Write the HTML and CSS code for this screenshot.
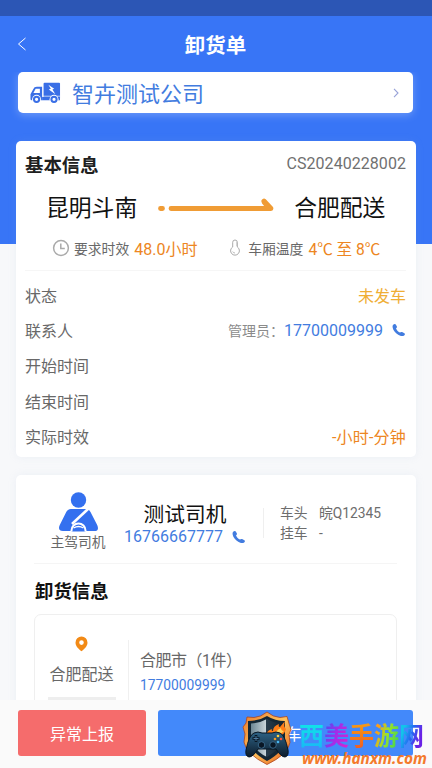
FILE: index.html
```html
<!DOCTYPE html>
<html lang="zh-CN">
<head>
<meta charset="utf-8">
<title>卸货单</title>
<link rel="stylesheet" href="styles.css">
</head>
<body>
<svg class="defs" width="0" height="0">
  <symbol id="phone" viewBox="0 0 14 14"><path d="M1.200 1.800C2 .8 3.300.7 3.800 1.500l1.100 2c.3.7-.2 1.300-.9 1.900.6 1.500 1.900 2.900 3.900 4.100.8-.6 1.500-.8 2.200-.4l2.300 1.200c.8.5.7 1.500-.3 2.200-1.400 1-3.700.6-5.900-.8C3.300 9.900 1.200 7.200.7 4.700.4 3.400.6 2.500 1.200 1.800Z" fill="currentColor"/></symbol>
</svg>
<div class="app">
  <div class="status-bar"></div>
  <header class="nav">
    <svg class="back" viewBox="0 0 10 14"><path d="M8.500 1 1.500 7l7 6" fill="none" stroke="#fff" stroke-width="1"/></svg>
    <h1>卸货单</h1>
  </header>
  <main class="content">
    <section class="company">
      <svg class="truck" viewBox="0 0 32 22">
        <path d="M15 .5h15q1 0 1 1v15H14v-15q0-1 1-1Z" fill="#3a6fe6"/>
        <path d="M12.500 4.500v14H1.800q-1.300 0-1.300-1.300v-5L3.300 7Q4.300 4.500 7 4.500Z" fill="#3a6fe6"/>
        <path d="M5.800 6.500h4.400V11H3.500Z" fill="#fff"/>
        <path d="M12.500 15h18.500v3.500H12.500Z" fill="#3a6fe6"/>
        <path d="M13 14.300h18" stroke="#fff" stroke-width=".7"/>
        <circle cx="6.800" cy="17.500" r="4.600" fill="#fff"/><circle cx="24.800" cy="17.500" r="4.600" fill="#fff"/>
        <circle cx="6.800" cy="17.500" r="2.700" fill="#fff" stroke="#3a6fe6" stroke-width="2.100"/>
        <circle cx="24.800" cy="17.500" r="2.700" fill="#fff" stroke="#3a6fe6" stroke-width="2.100"/>
        <path d="m19 2.500 6 4-1.800.9 3 4.900-6.800-4.900 2.100-.9Z" fill="#fff"/>
      </svg>
      <span class="company-name">智卉测试公司</span>
      <svg class="go" viewBox="0 0 6 10"><path d="m1 .8 4 4.200-4 4.200" fill="none" stroke="#98a2d8" stroke-width="1.100"/></svg>
    </section>

    <section class="card basic">
      <div class="basic-head"><h2>基本信息</h2><span class="order-no">CS20240228002</span></div>
      <div class="route">
        <span>昆明斗南</span>
        <svg class="arrow" viewBox="0 0 118 16"><g stroke="#f09c35" stroke-width="4.800" stroke-linecap="round" stroke-linejoin="round" fill="none"><path d="M3.500 10.500h2M14 10.500h100L107 3"/><path d="M107 4l4 5" /></g></svg>
        <span>合肥配送</span>
      </div>
      <div class="limits">
        <svg class="clock" viewBox="0 0 18 18"><circle cx="9" cy="9" r="7.400" fill="none" stroke="#aaa" stroke-width="1.500"/><path d="M8.800 4.500v5h4" fill="none" stroke="#aaa" stroke-width="1.500"/></svg>
        <span class="limit-label">要求时效</span><b class="time">48.0小时</b>
        <svg class="thermo" viewBox="0 0 12 17"><path d="M3.700 8V3.300a2.300 2.300 0 0 1 4.600 0V8a4.400 4.400 0 1 1-4.600 0Z" fill="none" stroke="#aaa" stroke-width="1"/><path d="M3.700 12.500q.5 1.500 2.300 1.500M8.300 4H7M8.300 6H7" fill="none" stroke="#aaa" stroke-width=".8"/></svg>
        <span class="limit-label">车厢温度</span><b class="temp">4℃ 至 8℃</b>
      </div>
      <dl class="rows">
        <div><dt>状态</dt><dd class="yellow">未发车</dd></div>
        <div><dt>联系人</dt><dd class="contact"><small>管理员：</small><span>17700009999</span><svg class="phone"><use href="#phone"/></svg></dd></div>
        <div><dt>开始时间</dt><dd></dd></div>
        <div><dt>结束时间</dt><dd></dd></div>
        <div><dt>实际时效</dt><dd class="orange">-小时-分钟</dd></div>
      </dl>
    </section>

    <section class="card trip">
      <div class="driver">
        <div class="role">
          <svg viewBox="0 0 40 40"><circle cx="20.500" cy="8" r="7.700" fill="#3470ef"/><path d="M13 17h15q3 0 4.500 3l6.700 13q2.500 6-3 6H5q-6-.5-3-6.500L8 20.500Q9.500 17 13 17Z" fill="#3470ef"/><path d="M30.500 16.500 14 32" stroke="#fff" stroke-width="2.600"/><path d="M13.500 39.500v-1a7 7 0 0 1 14 0v1" fill="#3470ef" stroke="#fff" stroke-width="2"/><path d="M15.500 36q5-3 10 0" fill="none" stroke="#fff" stroke-width="1.400"/></svg>
          <span>主驾司机</span>
        </div>
        <div class="person">
          <strong>测试司机</strong>
          <div class="tel"><span>16766667777</span><svg class="phone"><use href="#phone"/></svg></div>
        </div>
        <div class="plates"><span>车头</span><span>皖Q12345</span><span>挂车</span><span>-</span></div>
      </div>
      <h2 class="unload-title">卸货信息</h2>
      <div class="stop">
        <div class="stop-name">
          <svg viewBox="0 0 13 16"><path fill-rule="evenodd" d="M6.500.5a6 6 0 0 0-6 6.200C.5 10.700 5 14 6.500 15.300 8 14 12.500 10.700 12.500 6.700A6 6 0 0 0 6.500.5Zm0 3.800a2.300 2.300 0 1 1 0 4.600 2.300 2.300 0 0 1 0-4.600Z" fill="#f28a16"/></svg>
          <span>合肥配送</span>
          <i></i>
        </div>
        <div class="stop-info"><span>合肥市（1件）</span><a>17700009999</a></div>
      </div>
    </section>
  </main>
  <footer class="actions"><button class="report">异常上报</button><button class="depart">发车</button></footer>
</div>

<div class="watermark">
  <svg class="shield" viewBox="0 0 50 54">
    <defs>
      <linearGradient id="rim" x1="0" y1="0" x2="1" y2="1"><stop offset="0" stop-color="#e8772a"/><stop offset=".5" stop-color="#ffc35c"/><stop offset="1" stop-color="#e25a16"/></linearGradient>
      <linearGradient id="steel" x1="0" y1="0" x2="1" y2="0"><stop offset="0" stop-color="#6d8794"/><stop offset=".48" stop-color="#c7d4da"/><stop offset=".5" stop-color="#263c4c"/><stop offset="1" stop-color="#16242f"/></linearGradient>
      <linearGradient id="pad" x1="0" y1="0" x2="0" y2="1"><stop offset="0" stop-color="#2e6385"/><stop offset="1" stop-color="#0c1b2b"/></linearGradient>
    </defs>
    <path d="M25 1q6 5 13 5.500l7-1 2 7 2 6-2 5 1 8q-2 12-23 22Q4 43 2 31l1-8-2-7 3-4 1-6 7 .5Q19 6 25 1Z" fill="url(#rim)" stroke="#ae451d" stroke-width=".8"/>
    <path d="M25 5q8 5 18 5v18q-1 13-18 22Q8 41 6 28V10Q17 10 25 5Z" fill="#142734"/>
    <path d="M25 8q7 4 15 4.500V28q-2 11-15 18Q11 39 9 28V12.500Q18 12 25 8Z" fill="url(#steel)"/>
    <path d="M24 23q2-4 6-5-1 2 1 2 0-5 6-7-1 3 1 3l5-6q-2 5 1 8-1 5-6 7Z" fill="#ff7d16"/>
    <path d="M29 23q3-3 5-2 2-3 5-4 0 3 3 3l-5 4Z" fill="#ffd25a"/>
    <path d="M12 22q4-2 8 0h10q4-2 8 0 5 2 8 17 1 6-3 7-4 0-9-8H16q-5 8-9 8-4-1-3-7 3-15 8-17Z" fill="url(#pad)" stroke="#071522"/>
    <path d="M14 24v7M10.500 27.500h7" stroke="#071522" stroke-width="2.600"/><path d="M14 25v5M11.500 27.500h5" stroke="#4d7ba0"/>
    <circle cx="19.500" cy="34" r="3.300" fill="#091624" stroke="#386687"/><circle cx="31" cy="34" r="3.300" fill="#091624" stroke="#386687"/>
    <circle cx="36" cy="25" r="1.300" fill="#ffd33c"/><circle cx="39" cy="28" r="1.300" fill="#ff513a"/><circle cx="36" cy="31" r="1.300" fill="#48b5ee"/><circle cx="33" cy="28" r="1.300" fill="#f09a25"/>
  </svg>
  <div class="mark-text">
    <div class="mark-name"><span class="m1">西</span><span class="m2">美</span><span class="m3">手</span><span class="m4">游</span><span class="m5">网</span></div>
    <div class="mark-url">www.hanxm.com</div>
  </div>
</div>
</body>
</html>
```
FILE: styles.css
```css
* { box-sizing: border-box; margin: 0; padding: 0; }
body { width: 432px; height: 768px; overflow: hidden; font-family: Roboto, "Noto Sans CJK SC", sans-serif; font-size: 16px; color: #686868; }
h1, h2, b, strong, small { font-weight: 400; }
svg { display: block; flex: none; }
.defs { position: absolute; }
.app { display: flex; flex-direction: column; height: 768px; background: linear-gradient(#3875f6 244px, #f7f8fa 244px); }
.status-bar { height: 16px; background: #2c56b5; flex: none; }
.nav { height: 56px; flex: none; display: grid; grid-template-columns: 40px 1fr 40px; align-items: center; color: #fff; padding-top: 4px; }
.back { width: 10px; height: 14px; margin: -4px 0 0 17px; }
.nav h1 { font-size: 20.500px; line-height: 30px; font-weight: 700; text-align: center; margin-left: -1px; }
.content { flex: 1; min-height: 0; overflow: hidden; padding: 0 16px; }
.company { height: 41px; margin: 0 3px 28px 2px; background: #fff; border-radius: 5px; display: flex; align-items: center; padding: 0 14px 0 12px; box-shadow: 0 2px 8px rgba(255,255,255,.28); }
.truck { width: 31px; height: 22px; }
.company-name { flex: 1; margin-left: 11px; font-size: 22px; line-height: 32px; color: #427cdf; margin-top: 4px; }
.go { width: 6px; height: 10px; }
.card { background: #fff; border-radius: 5px; box-shadow: 0 0 8px rgba(160,180,210,.12); }
.basic { height: 316px; padding: 0 10px 0 9px; margin-bottom: 18px; }
.basic-head { height: 46px; display: flex; align-items: center; justify-content: space-between; }
.basic-head h2 { font-size: 18.400px; color: #202020; font-weight: 700; }
.order-no { color: #707070; padding-bottom: 1px; letter-spacing: .05px; }
.route { height: 42px; display: flex; align-items: center; padding-left: 21px; color: #111; font-size: 22.800px; }
.route span { margin-top: -4px; }
.arrow { width: 118px; height: 16px; margin: -4px 19px 0 20px; }
.limits { height: 42px; display: flex; align-items: center; padding-left: 27px; margin-bottom: 6px; border-bottom: 1px solid #f6f6f6; padding-bottom: 4px; }
.limits b, .orange { color: #ed8622; }
.limit-label { font-size: 13.800px; margin-right: 5px; }
.clock { width: 18px; height: 18px; margin-right: 4px; }
.time { width: 95px; }
.limits .temp { font-size: 15.600px; }
.thermo { width: 12px; height: 17px; margin-right: 7px; }
.rows div { height: 35.300px; display: flex; justify-content: space-between; align-items: center; }
.yellow { color: #efae35; }
.contact { display: flex; align-items: center; color: #427cdf; padding-top: 1px; }
.contact small { font-size: 14px; color: #8b8b8b; }
.orange { letter-spacing: .2px; }
.phone { width: 14px; height: 14px; color: #427cdf; margin-left: 9px; }
.trip { height: 300px; padding: 0 19px 0 18px; }
.driver { height: 89px; display: flex; border-bottom: 1px solid #f5f5f5; }
.role { width: 88px; display: flex; flex-direction: column; align-items: center; padding-top: 17px; font-size: 13.800px; line-height: 20px; }
.role svg { width: 40px; height: 40px; }
.person { width: 125px; display: flex; flex-direction: column; align-items: center; padding-top: 25px; }
.person strong { font-size: 20.700px; line-height: 30px; color: #111; margin-left: 1px; }
.tel { display: flex; align-items: center; line-height: 20px; color: #427cdf; margin-left: 1px; margin-top: -3px; }
.plates { display: grid; grid-template-columns: 39px auto; align-content: start; font-size: 13.800px; line-height: 20px; height: 30px; margin: 33px 0 0 16px; padding-left: 16px; border-left: 1px solid #efefef; color: #6d6d6d; }
.plates span { height: 20px; margin-top: -5px; margin-bottom: 5px; }
.unload-title { font-size: 18.400px; line-height: 28px; color: #111; font-weight: 700; margin: 14px 0 8px 1px; }
.stop { height: 160px; border: 1px solid #efefef; border-radius: 7px; display: flex; }
.stop-name { width: 93px; display: flex; flex-direction: column; align-items: center; padding-top: 21px; }
.stop-name svg { width: 13px; height: 16px; }
.stop-name span { line-height: 24px; margin-top: 11px; }
.stop-name i { width: 68px; height: 3px; background: #eee; margin-top: 10px; }
.stop-info { display: flex; flex-direction: column; border-left: 1px solid #f0f0f0; margin-top: 25px; padding-left: 11px; line-height: 24px; }
.stop-info span { margin-top: 9px; letter-spacing: -.5px; }
.stop-info a { font-size: 13.800px; color: #427cdf; }
.actions { height: 68px; flex: none; background: #fafafa; display: flex; gap: 12px; padding: 10px 19px 12px 18px; position: relative; }
.actions button { border: 0; border-radius: 3px; color: #fff; font: inherit; height: 46px; }
.report { width: 128px; background: #f56c6c; }
.depart { flex: 1; background: #4389fa; }
.watermark { position: absolute; left: 242px; top: 711px; display: flex; gap: 7px; }
.shield { width: 50px; height: 54px; }
.mark-text { width: 128px; padding-top: 6px; }
.mark-name { display: flex; font: 700 25px/34px "Noto Sans CJK SC", sans-serif; }
.mark-name span { background-clip: text; -webkit-background-clip: text; color: transparent; width: 25px; }
.m1 { background-image: linear-gradient(#10e4e8 20%, #19b4f6); }
.m2 { background-image: linear-gradient(110deg, #5848f0 15%, #a42de8 50%, #e320c9); }
.m3 { background-image: linear-gradient(#f79a13 20%, #ee5825); }
.m4 { background-image: linear-gradient(110deg, #ff9b19 20%, #9ce328 50%, #2fd257); }
.m5 { background-image: linear-gradient(110deg, #12c4ea 25%, #2468f2 50%, #6a22e6 75%); }
.mark-url { font: italic 700 15.400px/16px "Noto Sans", sans-serif; color: #f47a2c; margin: 0 0 0 3px; white-space: nowrap; }
```
